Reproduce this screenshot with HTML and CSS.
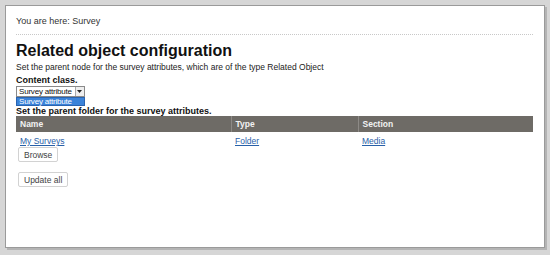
FILE: index.html
```html
<!DOCTYPE html>
<html lang="en">
<head>
  <meta charset="UTF-8">
  <title>Related object configuration</title>
  <link rel="stylesheet" href="styles.css">
</head>
<body>
  <div class="page">
    <div class="breadcrumb">You are here: Survey</div>

    <h1>Related object configuration</h1>
    <p class="desc">Set the parent node for the survey attributes, which are of the type Related Object</p>

    <div class="label">Content class.</div>
    <div class="select-wrap">
      <div class="select">
        <span>Survey attribute</span>
        <span class="arrow">
          <svg width="5" height="3" viewBox="0 0 5 3"><path d="M0 0h5L2.5 3z" fill="#222"/></svg>
        </span>
      </div>
      <div class="option">Survey attribute</div>
    </div>

    <div class="label tight">Set the parent folder for the survey attributes.</div>
    <table class="list">
      <tr>
        <th class="col-name">Name</th>
        <th class="col-type">Type</th>
        <th>Section</th>
      </tr>
      <tr>
        <td><a href="#">My Surveys</a></td>
        <td><a href="#">Folder</a></td>
        <td><a href="#">Media</a></td>
      </tr>
    </table>
    <button class="btn">Browse</button>

    <div class="actions">
      <button class="btn">Update all</button>
    </div>
  </div>
</body>
</html>
```

FILE: styles.css
```css
* {
  margin: 0;
  padding: 0;
  box-sizing: border-box;
}

body {
  font-family: "Liberation Sans", Arial, sans-serif;
  background: #d6d6d6;
  padding: 5px;
  height: 255px;
}

.page {
  background: white;
  width: 540px;
  height: 243px;
  border: 1px solid #9a9a9a;
  box-shadow: 2px 2px 0 #b4b4b4;
  padding: 10px 11px 0 10px;
}

.breadcrumb {
  font-size: 9px;
  color: #333;
  line-height: 10px;
  padding: 0 0 8px 0;
  border-bottom: 1px dotted #c8c8c8;
}

h1 {
  font-size: 16px;
  line-height: 18px;
  color: #111;
  margin-top: 7px;
}

.desc {
  font-size: 8.5px;
  color: #222;
  line-height: 12px;
  margin-top: 1px;
}

.label {
  font-size: 9px;
  font-weight: bold;
  color: #111;
  line-height: 11px;
  margin-top: 2px;
}

.label.tight {
  margin-top: 0;
  line-height: 10px;
}

.select-wrap {
  width: fit-content;
  white-space: nowrap;
  font-size: 8px;
  letter-spacing: -0.2px;
}

.select {
  display: flex;
  align-items: center;
  height: 11px;
  border: 1px solid #8a8a8a;
  color: #111;
  padding-left: 2px;
  background: white;
}

.select span:first-child {
  flex: 1;
  padding-right: 3px;
}

.arrow {
  width: 9px;
  height: 9px;
  border-left: 1px solid #aaa;
  background: #eee;
  display: flex;
  align-items: center;
  justify-content: center;
}

.option {
  background: #3b83d9;
  color: white;
  line-height: 7px;
  padding-left: 2px;
  height: 9px;
  border: 1px solid #2a64b0;
}

.list {
  width: 517px;
  border-collapse: collapse;
  font-size: 8.5px;
}

.list th {
  background: #6e6b66;
  color: #f2f2f2;
  text-align: left;
  font-weight: bold;
  height: 16px;
  padding: 0 4px;
  border-left: 1px solid #8d8a86;
}

.list th:first-child {
  border-left: none;
}

.col-name {
  width: 215px;
}

.col-type {
  width: 127px;
}

.list td {
  padding: 3px 4px 0 4px;
  height: 15px;
}

.list a {
  color: #2860a8;
}

.btn {
  display: block;
  font-family: "Liberation Sans", Arial, sans-serif;
  font-size: 8.5px;
  color: #444;
  background: white;
  border: 1px solid #d2d2d2;
  border-radius: 2px;
  height: 15px;
  padding: 0 5px;
  margin-left: 2px;
  cursor: pointer;
}

.actions {
  margin-top: 10px;
}
```
